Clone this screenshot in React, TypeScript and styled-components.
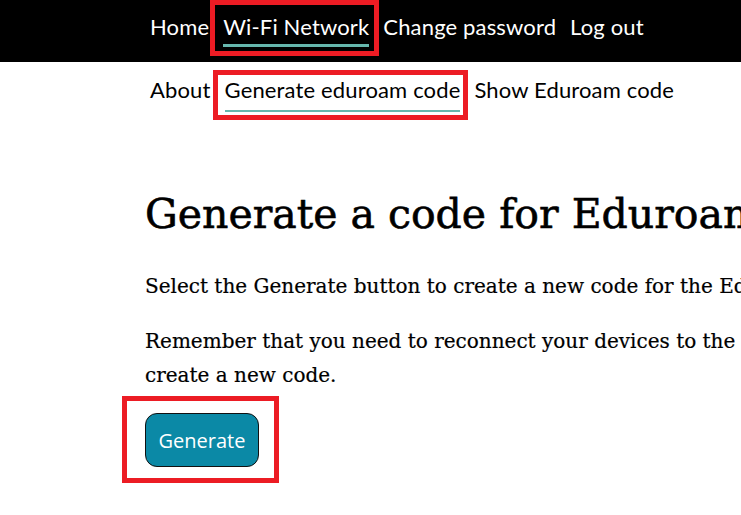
import React from "react";
import styled, { createGlobalStyle } from "styled-components";

const GlobalStyle = createGlobalStyle`
  html, body {
    margin: 0;
    padding: 0;
    background: #ffffff;
    overflow: hidden;
  }
`;

const Page = styled.div`
  width: 741px;
  min-height: 515px;
`;

const TopBar = styled.header`
  background: #000;
  height: 62px;
  display: flex;
  align-items: flex-start;
  padding-left: 143px;
`;

const TopItems = styled.div`
  display: flex;
  padding-top: 14px;
`;

const SubBar = styled.nav`
  height: 62px;
  display: flex;
  align-items: flex-start;
  padding-left: 143px;
  padding-top: 15px;
  box-sizing: border-box;
`;

const NavLink = styled.a<{ $dark?: boolean; $active?: boolean }>`
  display: block;
  padding: 0 7px;
  font-family: Lato, "Open Sans", sans-serif;
  font-size: 22px;
  line-height: 26px;
  letter-spacing: 0.15px;
  color: ${(p) => (p.$dark ? "#ffffff" : "#000000")};
  text-decoration: none;
  cursor: pointer;
  & > span {
    display: block;
    padding-bottom: ${(p) => (p.$dark ? "4px" : "7px")};
    border-bottom: ${(p) => (p.$dark ? "3px" : "2px")} solid
      ${(p) => (p.$active ? "#66b7ad" : "transparent")};
  }
`;

// red annotation frame drawn over the highlighted element
const Marked = styled.span<{ $inset: string }>`
  position: relative;
  display: inline-block;
  &::after {
    content: "";
    position: absolute;
    inset: ${(p) => p.$inset};
    border: 5px solid #ec1c24;
    pointer-events: none;
  }
`;

const Content = styled.main`
  width: 900px;
  padding-left: 145px;
  padding-top: 62px;
`;

const Title = styled.h1`
  margin: 0 0 27px;
  font-family: "DejaVu Serif", "Liberation Serif", serif;
  font-weight: 400;
  font-size: 41px;
  line-height: 56px;
  -webkit-text-stroke: 0.6px #000;
  color: #000;
  white-space: nowrap;
`;

const Para = styled.p`
  margin: 0 0 21px;
  font-family: "DejaVu Serif", "Liberation Serif", serif;
  font-size: 20px;
  line-height: 34px;
  -webkit-text-stroke: 0.2px #000;
  color: #000;
`;

const ButtonSlot = styled.div`
  display: block;
`;

const PrimaryButton = styled.button`
  width: 114px;
  height: 54px;
  background: #0b89a6;
  border: 1px solid #111;
  border-radius: 12px;
  color: #fff;
  font-family: "Open Sans", "DejaVu Sans", sans-serif;
  font-size: 20px;
  padding: 0;
  cursor: pointer;
`;

export default function App() {
  return (
    <Page>
      <GlobalStyle />
      <TopBar>
        <TopItems>
          <NavLink $dark>
            <span>Home</span>
          </NavLink>
          <Marked $inset="-14px -3px -9px -6px">
            <NavLink $dark $active>
              <span>Wi-Fi Network</span>
            </NavLink>
          </Marked>
          <NavLink $dark>
            <span>Change password</span>
          </NavLink>
          <NavLink $dark>
            <span>Log out</span>
          </NavLink>
        </TopItems>
      </TopBar>
      <SubBar>
        <NavLink>
          <span>About</span>
        </NavLink>
        <Marked $inset="-7px -1px -8px -5px">
          <NavLink $active>
            <span>Generate eduroam code</span>
          </NavLink>
        </Marked>
        <NavLink>
          <span>Show Eduroam code</span>
        </NavLink>
      </SubBar>
      <Content>
        <Title>Generate a code for Eduroam</Title>
        <Para>
          Select the Generate button to create a new code for the Eduroam
          network.
        </Para>
        <Para>
          Remember that you need to reconnect your devices to the Eduroam
          network after you create a new code.
        </Para>
        <ButtonSlot>
          <Marked $inset="-17px -20px -16px -23px">
            <PrimaryButton>Generate</PrimaryButton>
          </Marked>
        </ButtonSlot>
      </Content>
    </Page>
  );
}
